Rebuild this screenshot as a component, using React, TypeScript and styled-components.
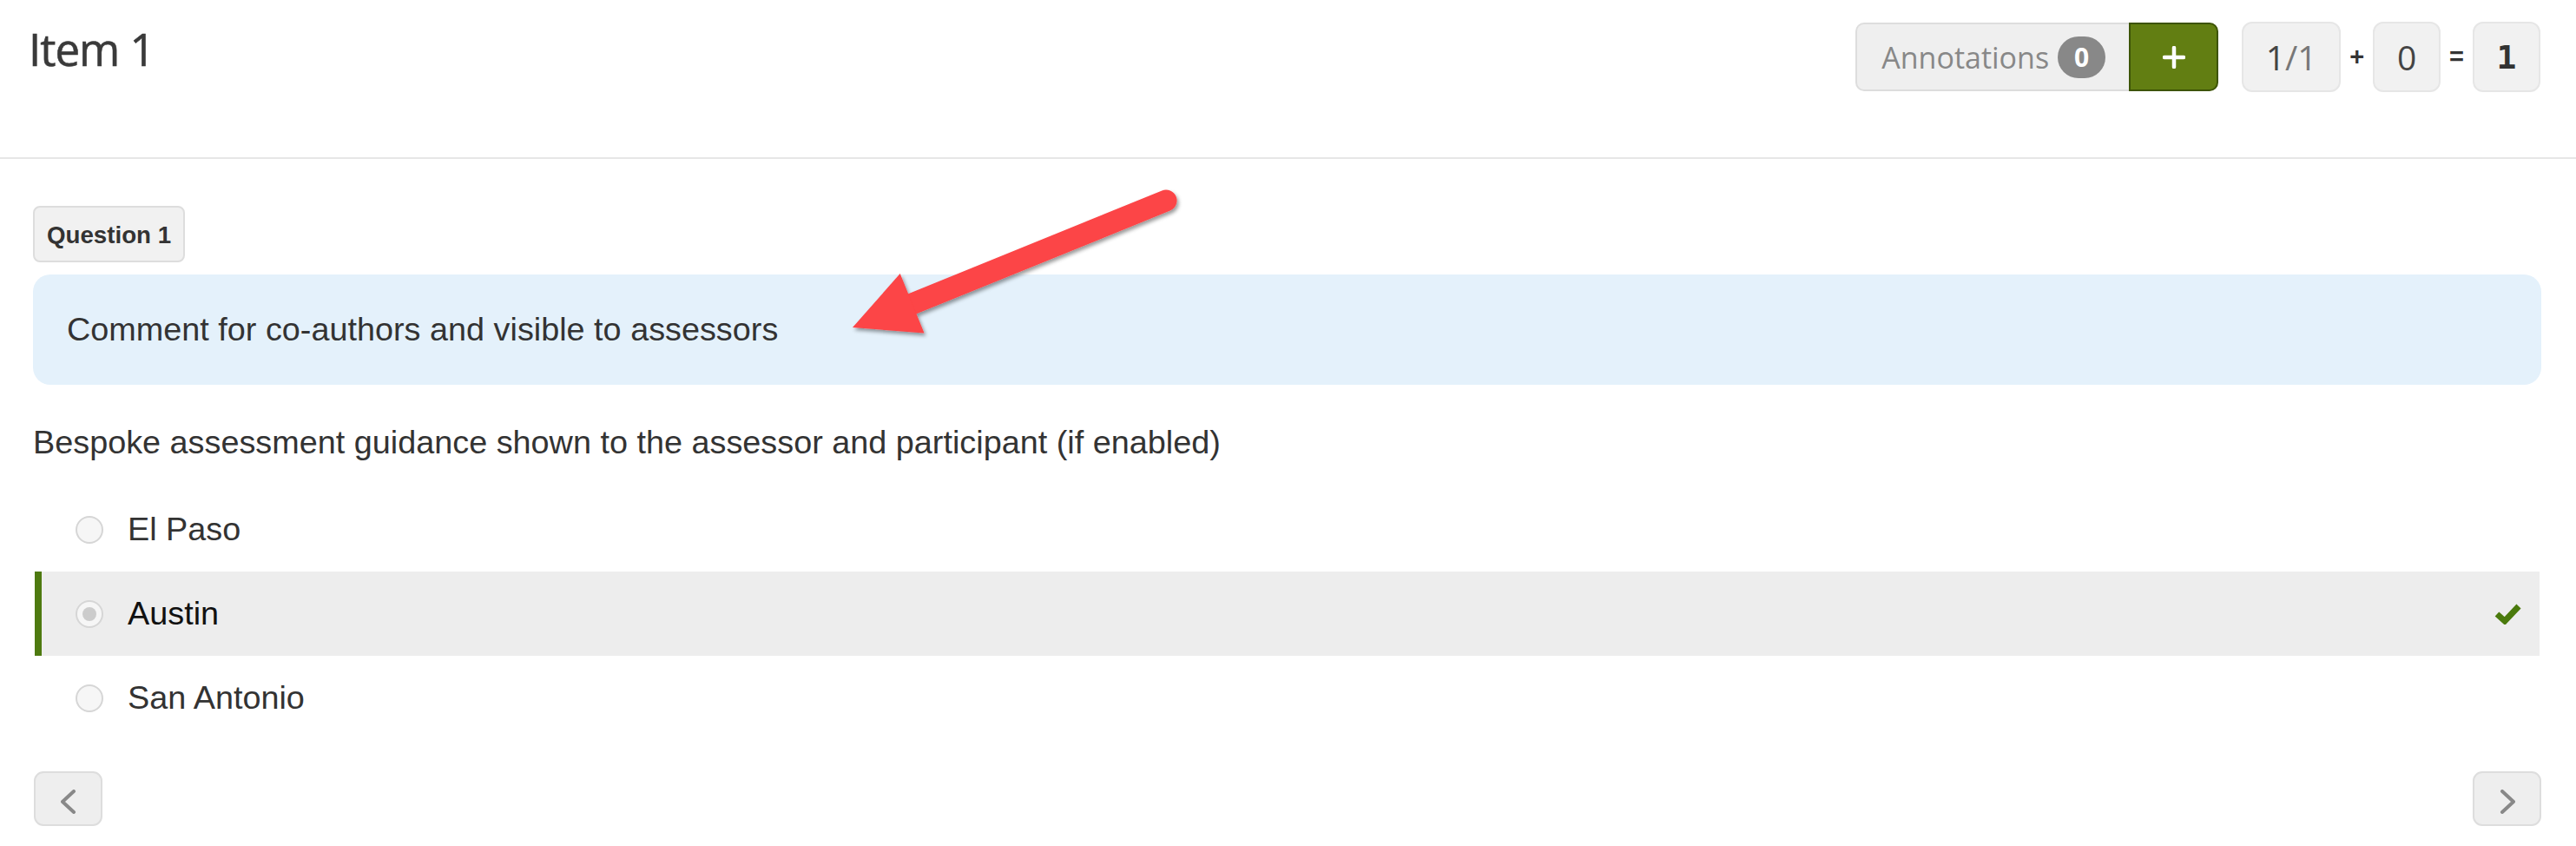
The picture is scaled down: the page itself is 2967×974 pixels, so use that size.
import React from "react";
import styled, { createGlobalStyle } from "styled-components";

const GlobalStyle = createGlobalStyle`
  *, *::before, *::after { box-sizing: border-box; }
  html, body { margin: 0; padding: 0; background: #ffffff; }
  body { font-family: "Liberation Sans", Arial, sans-serif; color: #333; }
`;

const Page = styled.div`
  position: relative;
  width: 100%;
  min-height: 974px;
`;

const Header = styled.header`
  display: flex;
  justify-content: space-between;
  align-items: flex-start;
  height: 183px;
  padding: 0 41px 0 33px;
  border-bottom: 2px solid #e6e6e6;
`;

const Title = styled.h1`
  margin: 26px 0 0;
  font-family: "Open Sans", "Liberation Sans", sans-serif;
  font-weight: 400;
  font-size: 51px;
  line-height: 60px;
  color: #3a3a3a;
  letter-spacing: -1px;
  -webkit-text-stroke: 0.6px #3a3a3a;
`;

const Toolbar = styled.div`
  display: flex;
  align-items: center;
  margin-top: 25px;
`;

const AnnotGroup = styled.div`
  display: flex;
  height: 79px;
  margin-right: 27px;
`;

const AnnotLabel = styled.div`
  display: flex;
  align-items: center;
  padding: 0 27px 0 28px;
  border: 2px solid #dddddd;
  border-right: none;
  border-radius: 10px 0 0 10px;
  background: #efefef;
  font-family: "Open Sans", "Liberation Sans", sans-serif;
  font-size: 34px;
  color: #888;
`;

const Badge = styled.span`
  display: flex;
  align-items: center;
  justify-content: center;
  width: 55px;
  height: 48px;
  margin-left: 10px;
  border-radius: 24px;
  background: #888;
  color: #fff;
  font-family: "Open Sans", "Liberation Sans", sans-serif;
  font-weight: 700;
  font-size: 30px;
`;

const AddButton = styled.button`
  display: flex;
  align-items: center;
  justify-content: center;
  width: 103px;
  height: 79px;
  padding: 0;
  background: #627e12;
  border: 2px solid #3d5406;
  border-radius: 0 10px 10px 0;
  color: #fff;
`;

const ScoreBox = styled.div<{ $w: number }>`
  display: flex;
  align-items: center;
  justify-content: center;
  width: ${(p) => p.$w}px;
  height: 81px;
  border: 2px solid #e6e6e6;
  border-radius: 12px;
  background: #f1f1f1;
  font-family: "Open Sans", "Liberation Sans", sans-serif;
  font-size: 39px;
  color: #444;
`;

const Muted = styled.span`
  color: #777;
`;

const TotalValue = styled.span`
  font-family: "DejaVu Sans Mono", "Liberation Mono", monospace;
  font-weight: 700;
  font-size: 38px;
  color: #333;
`;

const Operator = styled.span`
  margin: 0 10px;
  font-family: "Liberation Sans", Arial, sans-serif;
  font-weight: 700;
  font-size: 29px;
  color: #333;
`;

const Content = styled.main`
  padding: 54px 40px 0 38px;
`;

const QuestionLabel = styled.div`
  width: fit-content;
  padding: 16px 14px 14px;
  border: 2px solid #dddddd;
  border-radius: 8px;
  background: #f1f1f1;
  font-weight: 700;
  font-size: 27.7px;
  line-height: 31px;
  color: #333;
`;

const CommentBox = styled.div`
  margin-top: 14px;
  padding: 42px 39px;
  border-radius: 20px;
  background: #e4f1fb;
  font-size: 37.8px;
  line-height: 43px;
  color: #333;
`;

const Guidance = styled.p`
  margin: 45px 0 0;
  font-size: 37.8px;
  line-height: 43px;
  color: #333;
`;

const Options = styled.div`
  margin: 30px 2px 0;
  display: flex;
  flex-direction: column;
`;

const OptionRow = styled.div<{ $selected?: boolean }>`
  display: flex;
  align-items: center;
  height: 97px;
  padding: 0 21px 0 39px;
  border-left: 8px solid ${(p) => (p.$selected ? "#4e7a10" : "transparent")};
  background: ${(p) => (p.$selected ? "#ededed" : "transparent")};
`;

const Radio = styled.span<{ $checked?: boolean }>`
  position: relative;
  flex: none;
  width: 32px;
  height: 32px;
  margin-right: 28px;
  border: 2px solid #d6d6d6;
  border-radius: 50%;
  background: #f6f6f6;
  &::after {
    content: "";
    display: ${(p) => (p.$checked ? "block" : "none")};
    position: absolute;
    left: 6px;
    top: 6px;
    width: 16px;
    height: 16px;
    border-radius: 50%;
    background: #cccccc;
  }
`;

const OptionLabel = styled.span<{ $selected?: boolean }>`
  flex: 1;
  font-size: 37.8px;
  line-height: 43px;
  color: ${(p) => (p.$selected ? "#111" : "#333")};
`;

const Nav = styled.nav`
  display: flex;
  justify-content: space-between;
  margin-top: 36px;
  padding: 0 0 0 1px;
`;

const NavButton = styled.button`
  display: flex;
  align-items: center;
  justify-content: center;
  width: 79px;
  height: 63px;
  padding: 6px 0 0;
  border: 2px solid #dddddd;
  border-radius: 11px;
  background: #eeeeee;
`;

const ArrowOverlay = styled.svg`
  position: absolute;
  left: 960px;
  top: 205px;
  width: 400px;
  height: 200px;
  overflow: visible;
  pointer-events: none;
`;

const Chevron = ({ dir }: { dir: "left" | "right" }) => (
  <svg width="18" height="28" viewBox="0 0 18 28">
    <polyline
      points={dir === "left" ? "15,2 2,14 15,26" : "3,2 16,14 3,26"}
      fill="none"
      stroke="#888"
      strokeWidth="4"
      strokeLinecap="round"
      strokeLinejoin="round"
    />
  </svg>
);

const PlusIcon = () => (
  <svg width="26" height="26" viewBox="0 0 26 26">
    <path d="M13 2 V24 M2 13 H24" stroke="#fff" strokeWidth="4.5" strokeLinecap="round" />
  </svg>
);

const CheckIcon = () => (
  <svg width="31" height="25" viewBox="0 0 31 25">
    <polyline points="3,13 12,21 28,4" fill="none" stroke="#4a7a0c" strokeWidth="7" />
  </svg>
);

const options = [
  { label: "El Paso", selected: false },
  { label: "Austin", selected: true },
  { label: "San Antonio", selected: false },
];

export default function App() {
  return (
    <Page>
      <GlobalStyle />
      <Header>
        <Title>Item 1</Title>
        <Toolbar>
          <AnnotGroup>
            <AnnotLabel>
              Annotations
              <Badge>0</Badge>
            </AnnotLabel>
            <AddButton aria-label="Add annotation">
              <PlusIcon />
            </AddButton>
          </AnnotGroup>
          <ScoreBox $w={114}>
            1<Muted>/1</Muted>
          </ScoreBox>
          <Operator>+</Operator>
          <ScoreBox $w={78}>0</ScoreBox>
          <Operator>=</Operator>
          <ScoreBox $w={78}>
            <TotalValue>1</TotalValue>
          </ScoreBox>
        </Toolbar>
      </Header>

      <Content>
        <QuestionLabel>Question 1</QuestionLabel>
        <CommentBox>Comment for co-authors and visible to assessors</CommentBox>
        <Guidance>
          Bespoke assessment guidance shown to the assessor and participant (if enabled)
        </Guidance>
        <Options>
          {options.map((o) => (
            <OptionRow key={o.label} $selected={o.selected}>
              <Radio $checked={o.selected} />
              <OptionLabel $selected={o.selected}>{o.label}</OptionLabel>
              {o.selected && <CheckIcon />}
            </OptionRow>
          ))}
        </Options>
        <Nav>
          <NavButton aria-label="Previous">
            <Chevron dir="left" />
          </NavButton>
          <NavButton aria-label="Next">
            <Chevron dir="right" />
          </NavButton>
        </Nav>
      </Content>

      <ArrowOverlay viewBox="0 0 400 200">
        <defs>
          <filter id="arrowShadow" x="-20%" y="-20%" width="140%" height="150%">
            <feDropShadow dx="2" dy="3" stdDeviation="2.2" floodColor="#000" floodOpacity="0.4" />
          </filter>
        </defs>
        <g filter="url(#arrowShadow)" fill="#fc4446">
          <line x1="383" y1="26" x2="78" y2="150" stroke="#fc4446" strokeWidth="25" strokeLinecap="round" />
          <polygon points="22,172 104.5,178.5 76.7,110" />
        </g>
      </ArrowOverlay>
    </Page>
  );
}
